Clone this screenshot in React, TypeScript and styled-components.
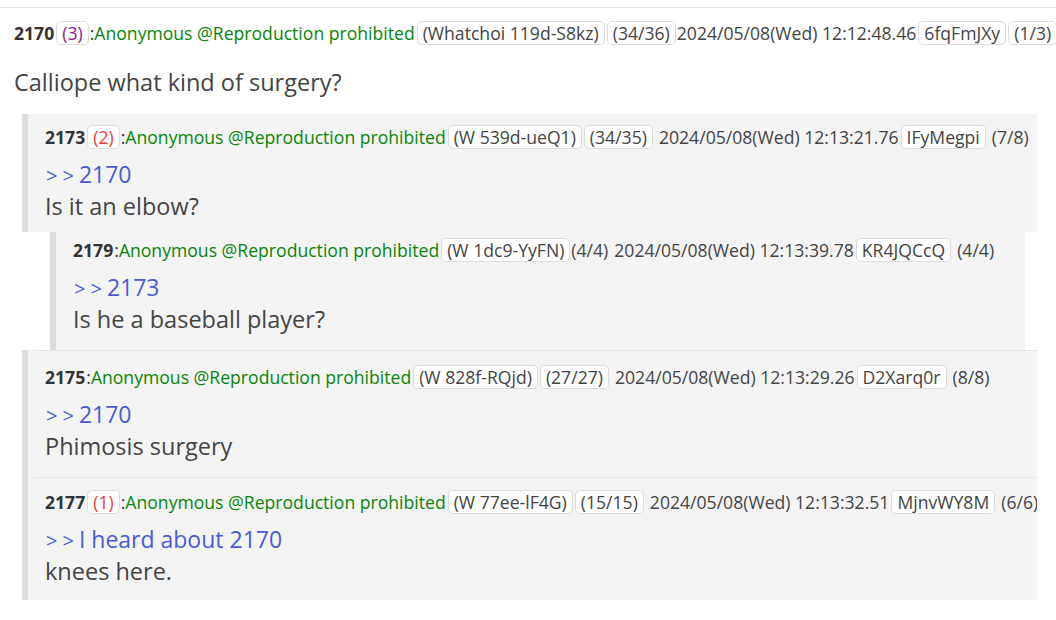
import React from "react";
import styled, { createGlobalStyle } from "styled-components";

type Tag = { text: string; boxed?: boolean; spaced?: boolean };

type PostData = {
  no: string;
  refs?: { count: string; tone: "purple" | "red" };
  name: string;
  ids: Tag[];
  date: string;
  dateSpaced?: boolean;
  uid: string;
  tail: Tag;
  link?: string;
  body: string;
};

const GlobalStyle = createGlobalStyle`
  html, body {
    margin: 0;
    padding: 0;
    background: #fff;
  }
  body {
    font-family: "Open Sans", "Noto Sans", sans-serif;
    color: #444;
  }
`;

const Thread = styled.div`
  margin-top: 7px;
  border-top: 1px solid #e3e3e3;
`;

const TopPost = styled.div`
  padding: 13px 0 16px 14px;
`;

const Header = styled.div`
  display: flex;
  align-items: center;
  height: 24px;
  font-size: 17.6px;
  white-space: nowrap;
  overflow: hidden;
  color: #444;
`;

const No = styled.span`
  font-weight: 700;
  color: #333;
`;

const Badge = styled.span<{ $tone?: "purple" | "red"; $spaced?: boolean }>`
  display: inline-flex;
  align-items: center;
  height: 22px;
  padding: 0 5px;
  margin-left: ${(p) => (p.$spaced ? "6px" : "2px")};
  border: 1px solid #dcdcdc;
  border-radius: 5px;
  background: #fff;
  color: ${(p) =>
    p.$tone === "purple" ? "#8a1c8a" : p.$tone === "red" ? "#f03c3c" : "#444"};
`;

const Plain = styled.span<{ $spaced?: boolean }>`
  margin-left: ${(p) => (p.$spaced ? "6px" : "1px")};
`;

const Name = styled.span`
  color: #0a850a;
`;

const Colon = styled.span`
  color: #333;
  margin-left: 1px;
`;

const Body = styled.div`
  font-size: 23.5px;
  line-height: 32px;
  color: #444;
`;

const TopBody = styled(Body)`
  margin-top: 21px;
`;

const Reply = styled.div<{ $indent: number; $right: number }>`
  margin: 0 ${(p) => p.$right}px 0 ${(p) => p.$indent}px;
  border-left: 6px solid #dcdcdc;
  background: #f4f4f4;
  padding-left: 5px;
`;

const ReplyInner = styled.div<{ $divided?: boolean; $top: number; $bottom: number }>`
  border-top: 1px solid ${(p) => (p.$divided ? "#e4e4ea" : "transparent")};
  padding: ${(p) => p.$top}px 0 ${(p) => p.$bottom}px 12px;
`;

const Quote = styled.div`
  margin-top: 9px;
  font-size: 23px;
  line-height: 32px;
  color: #4b5bd4;
`;

const Arrows = styled.span`
  font-size: 20px;
  line-height: 0;
  letter-spacing: 5px;
  margin-left: 1px;
`;

const PostHeader = ({ p }: { p: PostData }) => (
  <Header>
    <No>{p.no}</No>
    {p.refs && <Badge $tone={p.refs.tone}>({p.refs.count})</Badge>}
    <Colon>:</Colon>
    <Name>{p.name}</Name>
    {p.ids.map((t, i) =>
      t.boxed ? (
        <Badge key={i} $spaced={t.spaced}>
          {t.text}
        </Badge>
      ) : (
        <Plain key={i} $spaced={t.spaced}>
          {t.text}
        </Plain>
      )
    )}
    <Plain $spaced={p.dateSpaced}>{p.date}</Plain>
    <Badge>{p.uid}</Badge>
    {p.tail.boxed ? (
      <Badge>{p.tail.text}</Badge>
    ) : (
      <Plain $spaced>{p.tail.text}</Plain>
    )}
  </Header>
);

const op: PostData = {
  no: "2170",
  refs: { count: "3", tone: "purple" },
  name: "Anonymous @Reproduction prohibited",
  ids: [
    { text: "(Whatchoi 119d-S8kz)", boxed: true },
    { text: "(34/36)", boxed: true },
  ],
  date: "2024/05/08(Wed) 12:12:48.46",
  uid: "6fqFmJXy",
  tail: { text: "(1/3)", boxed: true },
  body: "Calliope what kind of surgery?",
};

type ReplyData = PostData & {
  indent: number;
  right: number;
  divided?: boolean;
  top: number;
  bottom: number;
};

const replies: ReplyData[] = [
  {
    no: "2173",
    refs: { count: "2", tone: "red" },
    name: "Anonymous @Reproduction prohibited",
    ids: [
      { text: "(W 539d-ueQ1)", boxed: true },
      { text: "(34/35)", boxed: true },
    ],
    date: "2024/05/08(Wed) 12:13:21.76",
    dateSpaced: true,
    uid: "IFyMegpi",
    tail: { text: "(7/8)" },
    link: "2170",
    body: "Is it an elbow?",
    indent: 22,
    right: 19,
    top: 10,
    bottom: 10,
  },
  {
    no: "2179",
    name: "Anonymous @Reproduction prohibited",
    ids: [
      { text: "(W 1dc9-YyFN)", boxed: true },
      { text: "(4/4)" },
    ],
    date: "2024/05/08(Wed) 12:13:39.78",
    dateSpaced: true,
    uid: "KR4JQCcQ",
    tail: { text: "(4/4)" },
    link: "2173",
    body: "Is he a baseball player?",
    indent: 50,
    right: 31,
    top: 5,
    bottom: 15,
  },
  {
    no: "2175",
    name: "Anonymous @Reproduction prohibited",
    ids: [
      { text: "(W 828f-RQjd)", boxed: true },
      { text: "(27/27)", boxed: true },
    ],
    date: "2024/05/08(Wed) 12:13:29.26",
    dateSpaced: true,
    uid: "D2Xarq0r",
    tail: { text: "(8/8)" },
    link: "2170",
    body: "Phimosis surgery",
    indent: 22,
    right: 19,
    divided: true,
    top: 14,
    bottom: 15,
  },
  {
    no: "2177",
    refs: { count: "1", tone: "red" },
    name: "Anonymous @Reproduction prohibited",
    ids: [
      { text: "(W 77ee-lF4G)", boxed: true },
      { text: "(15/15)", boxed: true },
    ],
    date: "2024/05/08(Wed) 12:13:32.51",
    dateSpaced: true,
    uid: "MjnvWY8M",
    tail: { text: "(6/6)" },
    link: "I heard about 2170",
    body: "knees here.",
    indent: 22,
    right: 19,
    divided: true,
    top: 12,
    bottom: 13,
  },
];

export default function App() {
  return (
    <>
      <GlobalStyle />
      <Thread>
        <TopPost>
          <PostHeader p={op} />
          <TopBody>{op.body}</TopBody>
        </TopPost>
        {replies.map((r) => (
          <Reply key={r.no} $indent={r.indent} $right={r.right}>
            <ReplyInner $divided={r.divided} $top={r.top} $bottom={r.bottom}>
              <PostHeader p={r} />
              <Quote>
                <Arrows>&gt;&gt;</Arrows>
                {r.link}
              </Quote>
              <Body>{r.body}</Body>
            </ReplyInner>
          </Reply>
        ))}
      </Thread>
    </>
  );
}
